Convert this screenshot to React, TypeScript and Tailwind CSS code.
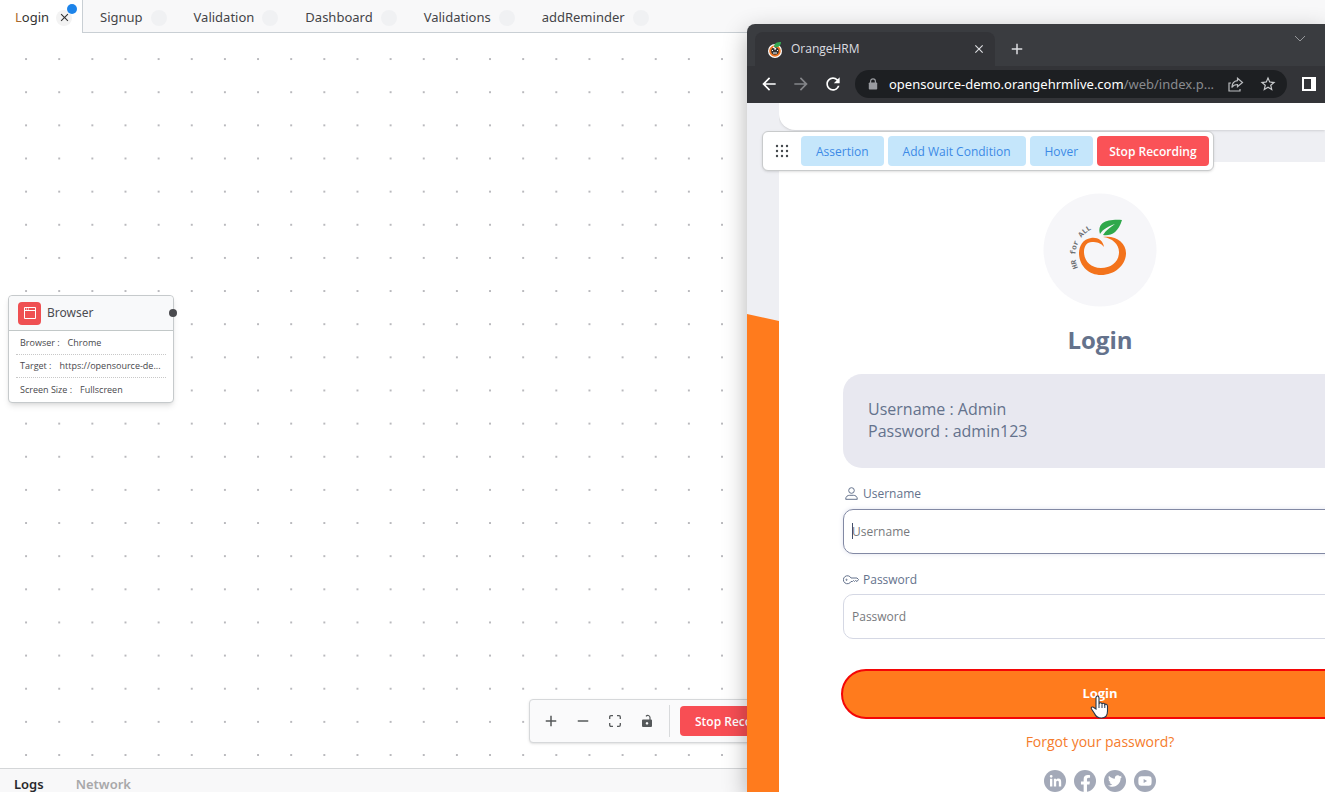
import React from "react";
import {
  MdAdd, MdArrowBack, MdArrowForward, MdClose, MdRefresh, MdRemove, MdStarBorder,
} from "react-icons/md";
import { FaFacebookF, FaLinkedinIn, FaTwitter, FaYoutube } from "react-icons/fa";

function FileTabs() {
  const others = ["Signup", "Validation", "Dashboard", "Validations", "addReminder"];
  return (
    <nav aria-label="Flows" className="flex h-[33px] shrink-0 bg-[#f8f8f9] text-[13px] text-[#444448]">
      <div className="relative flex w-[82px] shrink-0 items-center bg-white pl-[15px] pt-0.5 text-[#333333]">
        <button className="w-[35px] text-left"><span className="text-[#a8682c]">L</span>ogin</button>
        <button aria-label="Close Login" className="ml-1.5 flex h-4 w-4 items-center justify-center rounded-full bg-[#f3f3f3]">
          <MdClose size={13} />
        </button>
        <span className="absolute right-[5px] top-1 h-2.5 w-2.5 rounded-full bg-[#1d84ea]" />
      </div>
      <div className="flex min-w-0 flex-1 border-b border-l border-[#c9cfd4] pt-[3px]">
        {others.map((name) => (
          <div key={name} className="flex shrink-0 items-center gap-2 pl-[17px] pr-[10px]">
            <button>{name}</button>
            <span className="h-4 w-4 rounded-full bg-[#f0f1f3]" />
          </div>
        ))}
      </div>
    </nav>
  );
}

function DotGrid() {
  return (
    <svg className="absolute inset-0 h-full w-full" aria-hidden="true">
      <defs>
        <pattern id="dots" width="33.14" height="33.14" patternUnits="userSpaceOnUse" x="9.5" y="9.5">
          <circle cx="16.57" cy="16.57" r="0.9" fill="#9a9aa0" />
        </pattern>
      </defs>
      <rect width="100%" height="100%" fill="url(#dots)" />
    </svg>
  );
}

function BrowserNode() {
  const rows = [
    ["Browser :", "Chrome"],
    ["Target :", "https://opensource-de..."],
    ["Screen Size :", "Fullscreen"],
  ];
  return (
    <section className="absolute left-2 top-[262px] w-[166px] rounded border border-[#c6cacc] bg-white shadow-md">
      <header className="flex h-[35px] items-center gap-1.5 rounded-t border-b border-[#c2c8c8] bg-[#f8f9fa] pl-[9px]">
        <span className="flex h-[23px] w-[23px] items-center justify-center rounded bg-[#ef5052]">
          <svg width="12" height="12" viewBox="0 0 12 12" fill="none" stroke="#fff">
            <path d="M.5 .5h11v11H.5zM.5 3.5h11M2 2h1M4 2h1" />
          </svg>
        </span>
        <h2 className="text-[12px] text-[#4c4c50]">Browser</h2>
      </header>
      <span className="absolute -right-1 top-[13px] h-2 w-2 rounded-full bg-[#4a4a4e]" />
      <dl className="whitespace-nowrap px-[7px] pb-px pt-px font-['Open_Sans',sans-serif] text-[9px] text-[#48484c]">
        {rows.map(([k, v], i) => (
          <div key={k} className={"flex h-[23px] items-center gap-2 px-1 " + (i < 2 ? "border-b border-dotted border-[#c8c8c8]" : "")}>
            <dt>{k}</dt>
            <dd>{v}</dd>
          </div>
        ))}
      </dl>
    </section>
  );
}

function CanvasControls() {
  return (
    <div className="absolute bottom-[25px] left-[529px] flex h-11 items-center rounded-sm border border-[#d6d8da] bg-[#fafafb] pl-[5px] pr-2 text-[#55585a] shadow">
      <button aria-label="Zoom in" className="flex w-8 justify-center"><MdAdd size={18} /></button>
      <button aria-label="Zoom out" className="flex w-8 justify-center"><MdRemove size={18} /></button>
      <button aria-label="Fit view" className="flex w-8 justify-center">
        <svg width="12" height="12" viewBox="0 0 12 12" fill="none" stroke="currentColor" strokeWidth="1.3">
          <path d="M.7 4V2Q.7 .7 2 .7h2M8 .7h2Q11.300 .7 11.300 2v2M11.300 8v2Q11.300 11.300 10 11.300H8M4 11.300H2Q.7 11.300 .7 10V8" />
        </svg>
      </button>
      <button aria-label="Lock" className="flex w-8 justify-center">
        <svg width="12" height="14" viewBox="0 0 12 14">
          <path d="M5 2.300a2.200 2.200 0 0 1 4 1.200V6" fill="none" stroke="currentColor" strokeWidth="1.200" />
          <path fillRule="evenodd" d="M2 5.500h8q1 0 1 1V12q0 1-1 1H2q-1 0-1-1V6.500q0-1 1-1zM6 8a1.300 1.300 0 1 0 .01 0z" fill="currentColor" />
        </svg>
      </button>
      <span className="ml-[6px] h-8 w-px bg-[#d8dadc]" />
      <button className="ml-2.5 h-[30px] whitespace-nowrap rounded bg-[#f84e54] px-[15px] pt-0.5 font-['Open_Sans',sans-serif] text-[12px] font-semibold text-white">Stop Recording</button>
    </div>
  );
}

function Favicon() {
  return (
    <svg width="16" height="17" viewBox="0 0 16 17" aria-hidden="true">
      <circle cx="8" cy="10" r="7" fill="#fff" />
      <circle cx="8" cy="10" r="4.800" fill="#333" stroke="#ef7623" strokeWidth="2" />
      <path d="M5 9l1 1M8 8v1M11 9l-1 1M6 12h4" stroke="#fff" strokeWidth="1" />
      <path d="M7 6C7 2 10 1 14 1c0 3-2 6-6 5z" fill="#35a853" />
      <path d="M6 6l3 2" stroke="#fff" strokeWidth="1.300" />
    </svg>
  );
}

function ChromeHeader() {
  return (
    <header className="shrink-0 bg-[#3a3c40] text-[#dcdde0]">
      <div className="flex h-[42px] items-center">
        <div className="ml-2 mt-2 flex h-[34px] w-[240px] shrink-0 items-center rounded-t-lg bg-[#333438] pl-3">
          <Favicon />
          <span className="ml-2 flex-1 font-['Open_Sans',sans-serif] text-[12px]">OrangeHRM</span>
          <button aria-label="Close tab" className="mr-[9px]"><MdClose size={14} /></button>
        </div>
        <button aria-label="New tab" className="ml-[13px] mt-2"><MdAdd size={18} /></button>
        <button aria-label="Search tabs" className="mb-3.5 ml-auto mr-[19px] text-[#96989b]">
          <svg width="12" height="7" viewBox="0 0 12 7" fill="none" stroke="currentColor"><path d="M1 1l5 5 5-5" /></svg>
        </button>
      </div>
      <div className="flex h-[37px] items-center bg-[#333438] pb-px pl-3">
        <button aria-label="Back" className="text-white"><MdArrowBack size={20} /></button>
        <button aria-label="Forward" className="ml-3 text-[#848589]"><MdArrowForward size={20} /></button>
        <button aria-label="Reload" className="ml-3 text-white"><MdRefresh size={20} /></button>
        <div className="ml-3 flex h-7 min-w-0 flex-1 items-center rounded-full bg-[#1d1f22] pl-[13px] pr-2.5">
          <svg width="10" height="12" viewBox="0 0 10 12" className="shrink-0" aria-hidden="true">
            <path d="M2.600 5V3.200a2.400 2.400 0 0 1 4.800 0V5" fill="none" stroke="#999ba0" strokeWidth="1.200" />
            <rect x=".8" y="4.500" width="8.400" height="7" rx=".8" fill="#999ba0" />
          </svg>
          <span className="ml-[11px] min-w-0 flex-1 truncate pt-px text-[13px] text-[#898b8f]">
            <span className="text-white">opensource-demo.orangehrmlive.com</span>/web/index.p...
          </span>
          <button aria-label="Share" className="ml-2 text-[#bbbdc0]">
            <svg width="16" height="15" viewBox="0 0 16 15" fill="none" stroke="currentColor" strokeWidth="1.200">
              <path d="M3 6H1v8h11v-2M9.500 1.200l5 4.300-5 4.300V7.500C6.500 7.500 5 8.500 3.800 10.500 4 6.500 6 4 9.500 3.600z" />
            </svg>
          </button>
          <button aria-label="Bookmark" className="ml-[15px] text-[#c8cacc]"><MdStarBorder size={18} /></button>
        </div>
        <button aria-label="Side panel" className="ml-[15px] mr-[9px]">
          <svg width="14" height="14" viewBox="0 0 14 14"><path fillRule="evenodd" fill="#fff" d="M0 0h14v14H0zM2 2v10h7V2z" /></svg>
        </button>
      </div>
    </header>
  );
}

function RecorderBar() {
  const soft = "h-[30px] rounded bg-[#c5e6fb] px-[15px] pt-0.5 font-medium text-[#3c8ae6]";
  return (
    <div className="absolute left-[15px] top-[28px] flex h-10 items-center gap-1 whitespace-nowrap rounded-md border border-[#c9cbcc] bg-white p-1 text-[12px] shadow-sm">
      <svg width="30" height="14" viewBox="-8 0 30 14" fill="#44484c" aria-hidden="true">
        {[2, 7, 12].map((y) => [2, 7, 12].map((x) => <circle key={x + "-" + y} cx={x} cy={y} r="1.200" />))}
      </svg>
      <button className={soft}>Assertion</button>
      <button className={soft}>Add Wait Condition</button>
      <button className={soft}>Hover</button>
      <button className="h-[30px] rounded bg-[#fa5257] px-3 pt-0.5 font-semibold text-white">Stop Recording</button>
    </div>
  );
}

function OrangeLogo() {
  return (
    <svg width="114" height="114" viewBox="0 0 114 114" role="img" aria-label="HR for All" className="shrink-0">
      <circle cx="57" cy="57" r="56.500" fill="#f6f6f9" />
      <path
        d="M61 54C60 47 54 44 48 45C40 46 36 53 36 60C36 73 46 82 58 82C72 82 83 72 83 60C83 50 73 42 60 44C69 45 76 51 76 59C76 69 68 75 58 75C47 75 41 67 41 59C41 53 44 49 49 49C54 49 58 50 61 54Z"
        fill="#f3731c"
      />
      <path d="M57 41C54 30 63 26 79 27C75 40 68 43 60 42C63 37 68 34 72 31C66 33 60 36 57 41Z" fill="#2fa84b" />
      <path id="arc" d="M35 75A30 30 0 0 1 49 36" fill="none" />
      <text fontSize="7.5" fontWeight="700" fill="#6c6e72" fontFamily="Liberation Mono, monospace"><textPath href="#arc">HR for ALL</textPath></text>
    </svg>
  );
}

function Cursor() {
  return (
    <svg width="19" height="25" viewBox="0 0 19 25" aria-hidden="true">
      <path
        d="M6 14V3.200Q6 1 7.500 1T9 3.200V9q.3-1.200 1.600-1.200T12 9.200q.4-1 1.500-.9t1.300 1.400q.5-.7 1.500-.5T17.500 11v5c0 4-2 7-6 7s-6-2-7-4.500L1.500 14Q.8 12.300 2 12t2.500 1z"
        fill="#fff" stroke="#26364a" strokeWidth="1.100"
      />
      <path d="M9 9v4M12 9.500V13M14.800 10v3" stroke="#26364a" fill="none" />
    </svg>
  );
}

function LoginCard() {
  const field = "block h-[45px] w-full rounded-[10px] border px-2 text-[12px] placeholder:text-[#77797d] outline-none";
  const social = "flex h-[22px] w-[22px] justify-center rounded-full bg-[#a3a9b8] text-white";
  return (
    <div className="flex w-[642px] shrink-0 flex-col items-center bg-white px-16 pt-[31px] text-[#64728c]">
      <OrangeLogo />
      <h1 className="mt-[17px] text-[24px] font-bold leading-8">Login</h1>
      <div className="mt-[18px] h-[94px] w-full rounded-[19px] bg-[#e8e8f0] px-[25px] pt-6 text-[16px] leading-[22px]">
        <p>Username : Admin</p>
        <p>Password : admin123</p>
      </div>
      <form className="flex w-full flex-col" onSubmit={(e) => e.preventDefault()}>
        <label htmlFor="username" className="mb-1.5 mt-4 flex h-[19px] items-center gap-[5px] pl-[2px] text-[12px] font-medium">
          <svg width="13" height="13" viewBox="0 0 13 13" fill="none" stroke="currentColor">
            <circle cx="6.500" cy="3.500" r="2.800" /><path d="M.7 12.300c0-3 2-4 4-4h3.600c2 0 4 1 4 4z" />
          </svg>
          Username
        </label>
        <div className="relative">
          <input id="username" placeholder="Username" className={field + " border-[#8289a4] shadow-[0_0_5px_#e0e2ee]"} />
          <span className="absolute left-[9px] top-3.5 h-4 w-px bg-[#44506c]" />
        </div>
        <label htmlFor="password" className="mb-[5px] mt-4 flex h-[19px] items-center gap-1 text-[12px] font-medium">
          <svg width="16" height="10" viewBox="0 0 16 10" fill="none" stroke="currentColor">
            <path d="M8 3h6l1.500 1.500L14 6.500l-1.500-1-1 1-1-1-1 1H8A4 4 0 1 1 8 3z" /><circle cx="3.500" cy="4.800" r=".6" />
          </svg>
          Password
        </label>
        <input id="password" type="password" placeholder="Password" className={field + " border-[#d5d8e4]"} />
        <div className="relative -mx-0.5 mt-[30px]">
          <button className="block h-[50px] w-full rounded-full border-2 border-[#f40606] bg-[#ff7b1d] text-[13px] font-bold text-white">Login</button>
          <div className="absolute left-[249px] top-[26px]"><Cursor /></div>
        </div>
      </form>
      <a href="#forgot" className="mt-3 text-[14px] leading-[22px] text-[#f57c2c]">Forgot your password?</a>
      <div className="mt-[17px] flex gap-2">
        <a href="#linkedin" aria-label="LinkedIn" className={social + " items-center"}><FaLinkedinIn size={13} /></a>
        <a href="#facebook" aria-label="Facebook" className={social + " items-end"}><FaFacebookF size={17} /></a>
        <a href="#twitter" aria-label="Twitter" className={social + " items-center"}><FaTwitter size={14} /></a>
        <a href="#youtube" aria-label="YouTube" className={social + " items-center"}><FaYoutube size={14} /></a>
      </div>
    </div>
  );
}

function BrowserWindow() {
  return (
    <section className="absolute bottom-0 left-[747px] right-0 top-6 flex flex-col overflow-hidden rounded-tl-lg">
      <ChromeHeader />
      <main className="relative flex min-h-0 flex-1 bg-[#eeeff3] font-['Open_Sans',sans-serif]">
        <div className="flex w-8 shrink-0 flex-col pt-[211px]">
          <svg className="h-2 w-full shrink-0" viewBox="0 0 32 8" preserveAspectRatio="none"><path d="M0 0L32 7V8H0z" fill="#ff7b1d" /></svg>
          <div className="flex-1 bg-[#ff7b1d]" />
        </div>
        <div className="flex min-w-0 flex-1 flex-col overflow-hidden">
          <div className="h-[27px] shrink-0 rounded-bl-2xl bg-white shadow" />
          <div className="h-8 shrink-0" />
          <LoginCard />
        </div>
        <RecorderBar />
      </main>
    </section>
  );
}

export default function App() {
  return (
    <div className="relative flex h-screen flex-col overflow-hidden bg-white font-['Noto_Sans',sans-serif]">
      <FileTabs />
      <div className="relative min-h-0 flex-1 overflow-hidden">
        <DotGrid />
        <BrowserNode />
        <CanvasControls />
      </div>
      <footer className="flex h-6 shrink-0 items-start gap-8 border-t border-[#d4d6d8] bg-[#f8f8f9] pl-3.5 pt-[7px] text-[13px] font-semibold leading-[17px]">
        <button className="text-[#28282c]">Logs</button>
        <button className="text-[#a8a8aa]">Network</button>
      </footer>
      <div className="absolute bottom-0 left-[747px] right-0 top-6 rounded-tl-lg shadow-[0_8px_24px_rgba(0,0,0,0.3)]" />
      <BrowserWindow />
    </div>
  );
}
